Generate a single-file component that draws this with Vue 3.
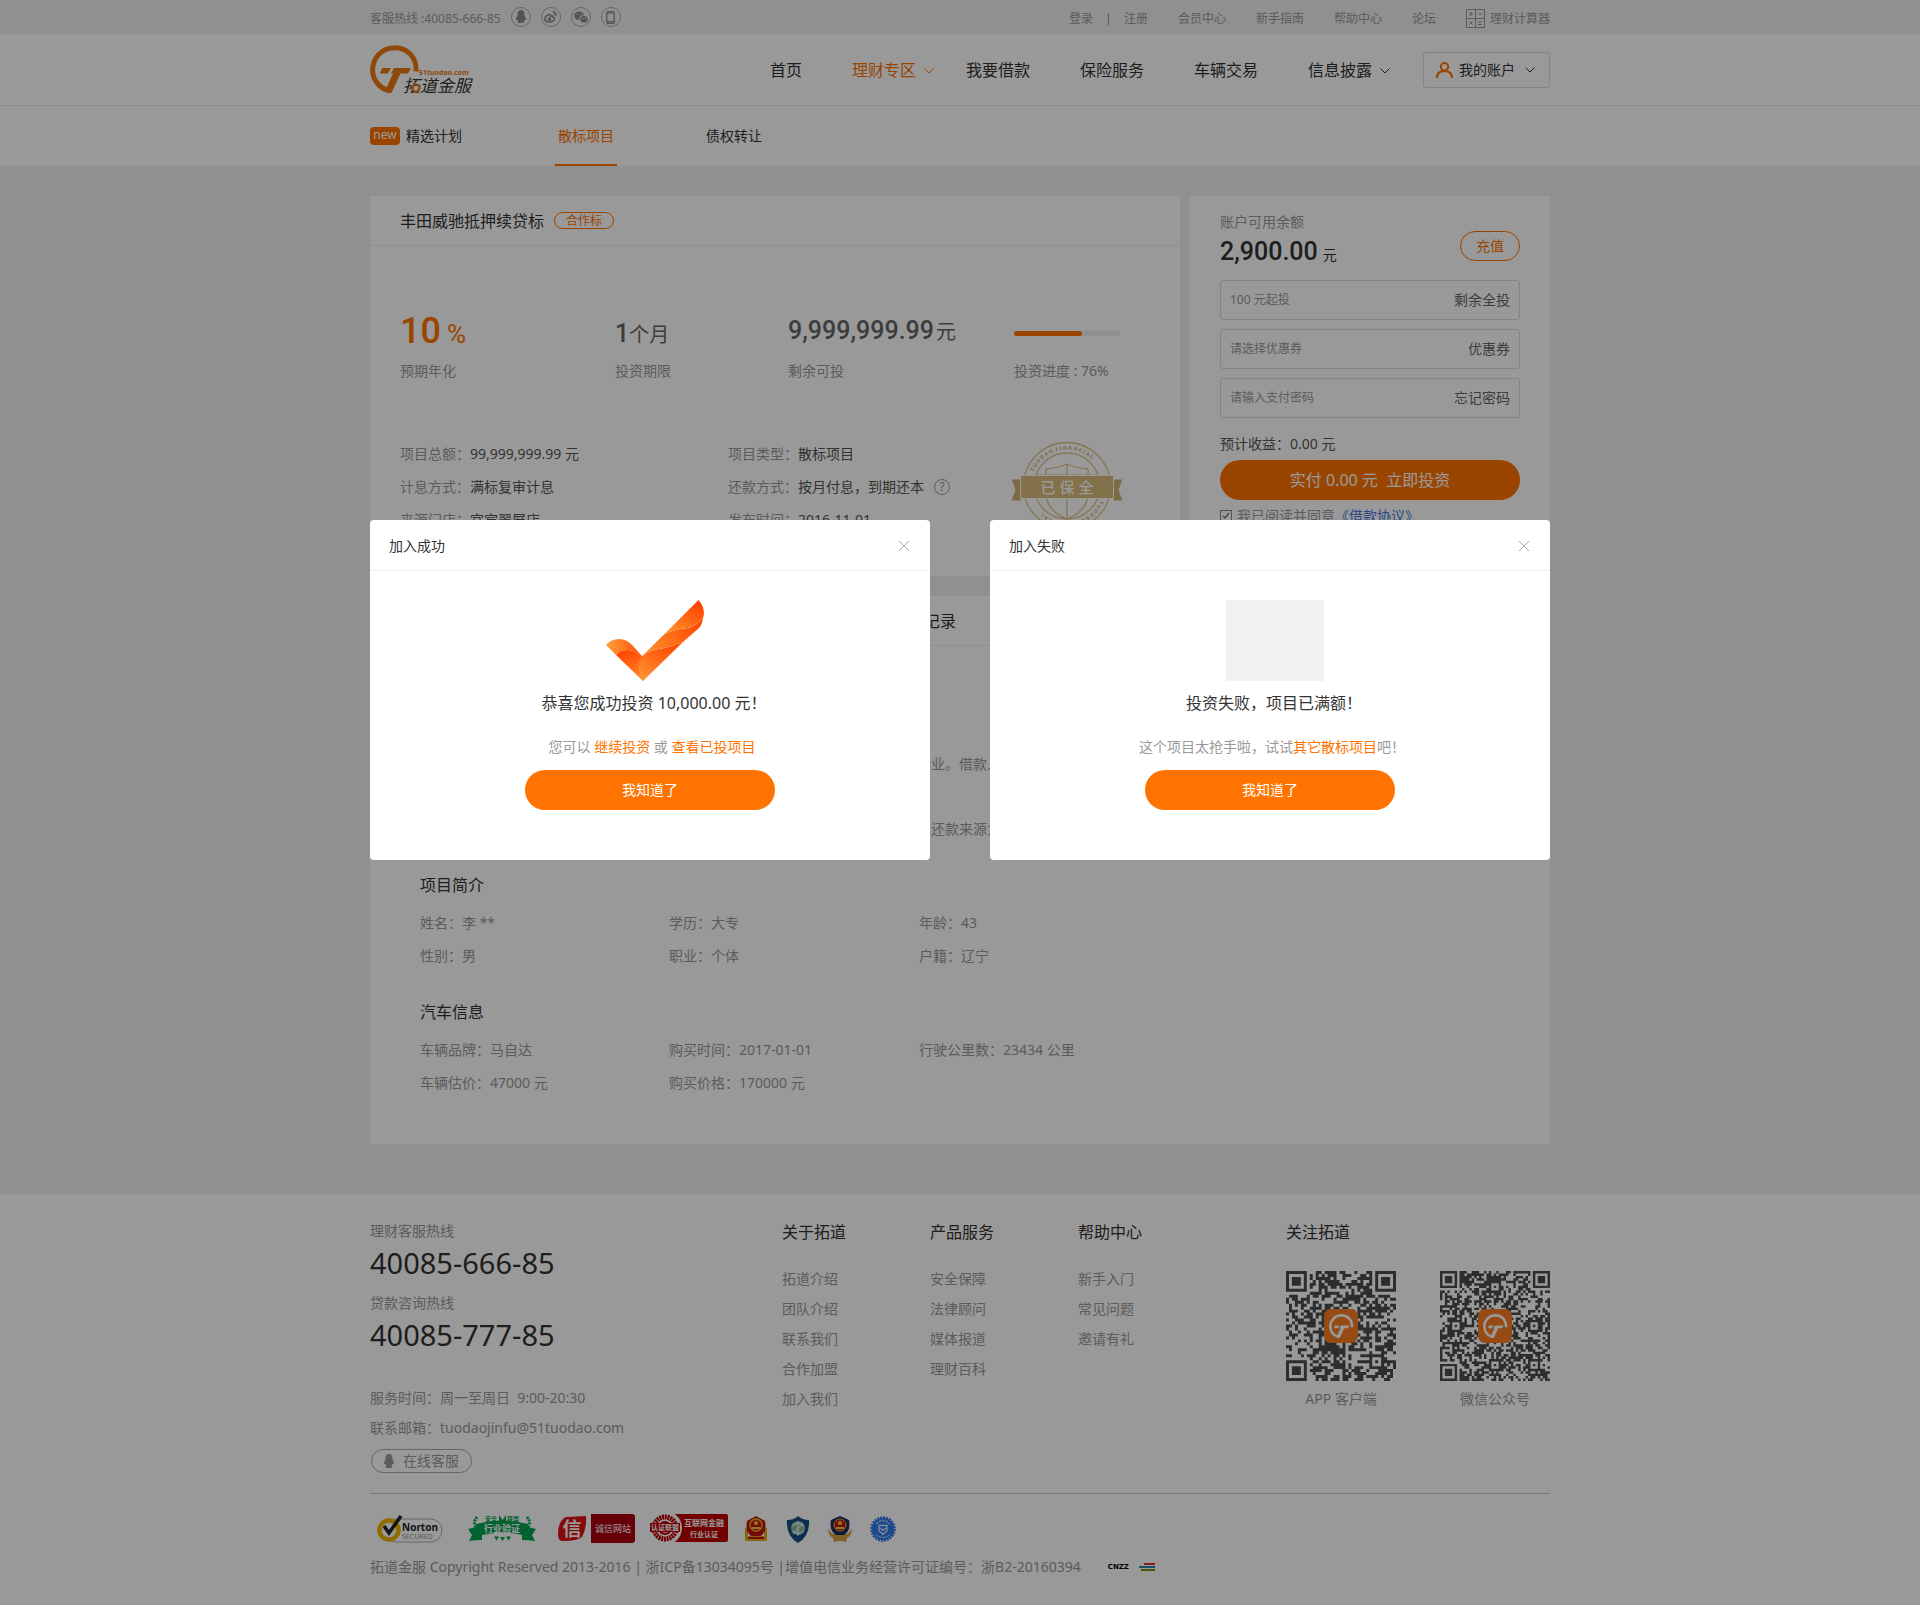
<script setup>
import { ref } from 'vue'

const topLinks = ['会员中心', '新手指南', '帮助中心', '论坛']
const navItems = [
  { text: '首页' },
  { text: '理财专区', active: true, arrow: true },
  { text: '我要借款' },
  { text: '保险服务' },
  { text: '车辆交易' },
  { text: '信息披露', arrow: true },
]
const details = [
  { label: '项目总额：', value: '99,999,999.99 元' },
  { label: '项目类型：', value: '散标项目' },
  { label: '计息方式：', value: '满标复审计息' },
  { label: '还款方式：', value: '按月付息，到期还本', help: true },
  { label: '来源门店：', value: '宜宾翠屏店' },
  { label: '发布时间：', value: '2016-11-01' },
]
const progress = 64
const groups = [
  { title: '项目简介', items: ['姓名：李 **', '学历：大专', '年龄：43', '性别：男', '职业：个体', '户籍：辽宁'] },
  {
    title: '汽车信息',
    items: ['车辆品牌：马自达', '购买时间：2017-01-01', '行驶公里数：23434 公里', '车辆估价：47000 元', '购买价格：170000 元'],
  },
]
const footCols = [
  { title: '关于拓道', links: ['拓道介绍', '团队介绍', '联系我们', '合作加盟', '加入我们'] },
  { title: '产品服务', links: ['安全保障', '法律顾问', '媒体报道', '理财百科'] },
  { title: '帮助中心', links: ['新手入门', '常见问题', '邀请有礼'] },
]

const agreed = ref(true)

// Builds the dark modules of a code: finders, alignment marks and data cells.
function codePath(n, marks, seed) {
  let s = seed
  const rand = () => {
    s = (s * 1103515245 + 12345) % 2147483648
    return s / 2147483648
  }
  const grid = Array.from({ length: n }, () => Array.from({ length: n }, () => rand() > 0.46))
  const stamp = (cx, cy, r, quiet) => {
    const reach = quiet ? r + 1 : r
    for (let y = cy - reach; y <= cy + reach; y++) {
      for (let x = cx - reach; x <= cx + reach; x++) {
        if (x < 0 || y < 0 || x >= n || y >= n) continue
        const d = Math.max(Math.abs(x - cx), Math.abs(y - cy))
        grid[y][x] = d === r || d <= r - 2
      }
    }
  }
  stamp(3, 3, 3, true)
  stamp(n - 4, 3, 3, true)
  stamp(3, n - 4, 3, true)
  marks.forEach(([x, y]) => stamp(x, y, 2, false))
  let d = ''
  grid.forEach((row, y) => row.forEach((on, x) => { if (on) d += `M${x} ${y}h1v1h-1z` }))
  return d
}
const codes = [
  { name: 'APP 客户端', n: 37, d: codePath(37, [[30, 30]], 71) },
  { name: '微信公众号', n: 45, d: codePath(45, [[22, 6], [6, 22], [38, 22], [22, 38], [38, 38]], 1234) },
]
</script>

<template>
  <div class="page">
    <div class="topbar">
      <div class="wrap topbar-in">
        <span>客服热线 :40085-666-85</span>
        <div class="socials">
          <a href="#" class="round" aria-label="QQ">
            <svg width="12" height="14" viewBox="0 0 12 14"><path fill="#8a8a8a" d="M6 0C3.700 0 2.500 1.700 2.500 4v1.500C1.500 7 .8 8.500 1 10c.2.600.9 0 1.200-.5.200.9.600 1.400 1.200 2-.9.400-.9 1.500.4 1.500.9 0 1.600-.2 2.200-.6.600.4 1.300.6 2.200.6 1.300 0 1.300-1.100.4-1.500.6-.6 1-1.100 1.200-2 .3.500 1 1.100 1.200.5.200-1.500-.5-3-1.500-4.500V4C9.500 1.700 8.300 0 6 0z" /></svg>
          </a>
          <a href="#" class="round" aria-label="微博">
            <svg width="14" height="12" viewBox="0 0 14 12" fill="none" stroke="#8a8a8a"><path d="M5.500 3.500C3 4 1 6 1 8c0 1.800 2 3 4.500 3S10.500 9.600 10.500 8c0-1-.8-1.500-1.500-1.700.3-1.300-.8-1.600-2.500-.9.200-1 .2-1.900-1-1.900z" stroke-width="1.600" /><circle cx="5.500" cy="8.200" r="1.300" fill="#8a8a8a" /><path d="M8.500.9c2.500-.3 4.500 1.800 4 4.300M9 3c1.100-.1 1.700.6 1.500 1.700" stroke-width="1.100" /></svg>
          </a>
          <a href="#" class="round" aria-label="微信">
            <svg width="14" height="13" viewBox="0 0 14 13"><path fill="#8a8a8a" d="M5.200.5C2.300.5.200 2.300.200 4.600c0 1.300.7 2.400 1.800 3.200L1.600 9.300l1.700-.9c.6.200 1.200.3 1.900.3C4.900 5.900 7 4.200 10 4.200 9.600 2 7.600.5 5.200.5z" /><path fill="#8a8a8a" d="M13.900 8.300c0-1.900-1.700-3.300-3.900-3.300S6 6.400 6 8.300s1.800 3.300 4 3.300c.5 0 1-.1 1.400-.2l1.400.8-.4-1.300c.9-.6 1.500-1.500 1.500-2.600z" /><path stroke="#eee" stroke-linecap="round" stroke-width="1.200" d="M3.500 3.400v.1M6.800 3.400v.1M8.700 7.400v.1M11.400 7.400v.1" /></svg>
          </a>
          <a href="#" class="round" aria-label="手机">
            <svg width="9" height="13" viewBox="0 0 9 13" fill="none" stroke="#8a8a8a"><rect x=".75" y=".75" width="7.500" height="11.500" rx="1.200" stroke-width="1.300" /><path d="M1 2h7M1 10.500h7" stroke-width=".9" /></svg>
          </a>
        </div>
        <nav class="toplinks">
          <a href="#">登录</a>
          <i class="bar"></i>
          <a href="#" class="reg">注册</a>
          <a v-for="t in topLinks" :key="t" href="#">{{ t }}</a>
          <a href="#" class="calc">
            <svg width="19" height="19" viewBox="0 0 19 19" fill="none" stroke="#999"><path d="M.5.5h18v18H.5zM9.500.5v18M.5 9.500h18M3 5h4M5 3v4M12 5h4M3.500 12.500l3 3M6.500 12.500l-3 3M12 13h4M12 15.500h4" /></svg>
            理财计算器
          </a>
        </nav>
      </div>
    </div>

    <header class="header">
      <div class="wrap header-in">
        <a href="#" class="logo" aria-label="拓道金服">
          <svg width="112" height="52" viewBox="0 0 112 52">
            <path fill="none" stroke="#ec7a12" stroke-width="5" d="M46 27.500C47 13 37 3.700 25 3.700 12 3.700 2.600 13.500 2.600 26c0 10 6.500 17.500 15.500 20.500L27 26.500" />
            <path fill="#ec7a12" d="M12 24h9l-3 5.500h-8zM24 24h17l-3 5.500h-7.500L21.500 49l-5-2.500L25 29.500h-4z" />
            <text x="49" y="31" font-size="7" font-weight="700" fill="#ec7a12">51tuodao.com</text>
            <text x="33" y="48" font-size="17" font-style="italic" fill="#333">拓道金服</text>
            <circle cx="46" cy="44" r="3.500" fill="none" stroke="#ec7a12" stroke-width="2" />
          </svg>
        </a>
        <nav class="nav">
          <a v-for="n in navItems" :key="n.text" href="#" :class="{ on: n.active }">
            {{ n.text }}
            <svg v-if="n.arrow" class="nav-arrow" width="10" height="6" viewBox="0 0 10 6" fill="none" stroke="currentColor"><path d="M.5.500 5 5 9.500.5" /></svg>
          </a>
        </nav>
        <button class="account">
          <svg width="17" height="16" viewBox="0 0 17 16" fill="none" stroke="#ff7300" stroke-width="2"><circle cx="8.500" cy="4.700" r="3.700" /><path d="M1 16c0-4.500 3-7 7.500-7s7.500 2.500 7.500 7" /></svg>
          <span>我的账户</span>
          <svg width="10" height="6" viewBox="0 0 10 6" fill="none" stroke="#333"><path d="M.5.500 5 5 9.500.5" /></svg>
        </button>
      </div>
    </header>

    <div class="subnav">
      <nav class="wrap subnav-in">
        <a href="#"><span class="new">new</span>精选计划</a>
        <a href="#" class="on">散标项目</a>
        <a href="#">债权转让</a>
      </nav>
    </div>

    <main class="wrap main">
      <div class="columns">
        <section class="card project">
          <div class="card-head">
            <h1>丰田威驰抵押续贷标</h1>
            <span class="tag">合作标</span>
          </div>
          <div class="stats">
            <div class="stat">
              <div class="figure rate"><b>10</b><span>%</span></div>
              <div class="cap">预期年化</div>
            </div>
            <div class="stat">
              <div class="figure term"><b>1</b>个月</div>
              <div class="cap">投资期限</div>
            </div>
            <div class="stat">
              <div class="figure left"><b>9,999,999.99</b>元</div>
              <div class="cap">剩余可投</div>
            </div>
            <div class="stat">
              <div class="figure gauge"><div class="track"><div class="fill" :style="{ width: progress + '%' }"></div></div></div>
              <div class="cap">投资进度 : 76%</div>
            </div>
          </div>
          <div class="details">
            <dl class="facts">
              <div v-for="d in details" :key="d.label">
                <dt>{{ d.label }}</dt>
                <dd>{{ d.value }}</dd>
                <span v-if="d.help" class="help">?</span>
              </div>
            </dl>
            <svg class="seal" width="112" height="90" viewBox="0 0 112 90">
              <defs>
                <path id="sealTop" d="M19.500 45a36.500 36.500 0 0 1 73 0" />
                <path id="sealBottom" d="M92.500 45a36.500 36.500 0 0 1-73 0" />
              </defs>
              <g fill="none" stroke="#e0c68c">
                <circle cx="56" cy="45" r="43.500" stroke-width="1.300" />
                <circle cx="56" cy="45" r="33" stroke-width="1.300" />
                <path stroke-width="1.300" d="M35 34V28q12-1 21-5 9 4 21 5v6M56 23v56M35 56q4 16 21 22 17-6 21-22" />
                <path d="M24 34h64M26 56h60" />
              </g>
              <g fill="#cbb277" font-size="5" font-weight="700">
                <text><textPath href="#sealTop" startOffset="15">T U O D A O&#160; F I N A N C I A L</textPath></text>
                <text><textPath href="#sealBottom" startOffset="15">T U O D A O&#160; F I N A N C I A L</textPath></text>
              </g>
              <path fill="#cdb170" stroke="#fff" d="M0 38h10v22H0l4-11zM112 38h-10v22h10l-4-11z" />
              <path fill="#d9bc7a" stroke="#fff" d="M9.500 34.500h93v23h-93z" />
              <text x="56" y="52" font-size="15" font-weight="500" fill="#fff" text-anchor="middle">已 保 全</text>
            </svg>
          </div>
        </section>

        <section class="card invest">
          <div class="balance">
            <div>
              <div class="bal-label">账户可用余额</div>
              <div class="bal"><b>2,900.00</b>元</div>
            </div>
            <button class="recharge">充值</button>
          </div>
          <div class="field"><input type="text" aria-label="投资金额" placeholder="100 元起投" /><button>剩余全投</button></div>
          <div class="field"><input type="text" aria-label="优惠券" placeholder="请选择优惠券" /><button>优惠券</button></div>
          <div class="field"><input type="password" aria-label="支付密码" placeholder="请输入支付密码" /><button>忘记密码</button></div>
          <div class="income">预计收益：0.00 元</div>
          <button class="pay">实付 0.00 元&#160; 立即投资</button>
          <label class="agree"><input v-model="agreed" type="checkbox" />我已阅读并同意<a href="#">《借款协议》</a></label>
        </section>
      </div>

      <section class="card info">
        <div class="card-head tabs">
          <a href="#">项目详情</a>
          <a href="#">投资记录</a>
        </div>
        <div class="intro">
          <p>借款人从事个体经营多年，收入稳定，信用记录良好，名下车辆一台，属于零售行业。借款人因店铺扩大经营，需要短期资金周转。</p>
          <p>借款人收入来源稳定，有较强的还款能力，抵押车辆已办理登记，风险整体可控，还款来源为店铺经营收入。</p>
        </div>
        <div v-for="g in groups" :key="g.title" class="group">
          <h2>{{ g.title }}</h2>
          <ul>
            <li v-for="i in g.items" :key="i">{{ i }}</li>
          </ul>
        </div>
      </section>
    </main>

    <footer class="footer">
      <div class="wrap">
        <div class="foot-top">
          <div class="contact">
            <div class="hot-label">理财客服热线</div>
            <div class="hot">40085-666-85</div>
            <div class="hot-label second">贷款咨询热线</div>
            <div class="hot">40085-777-85</div>
            <div class="service">服务时间：周一至周日&#160; 9:00-20:30</div>
            <div class="mail">联系邮箱：tuodaojinfu@51tuodao.com</div>
            <button class="online">
              <svg width="12" height="14" viewBox="0 0 12 14"><path fill="#999" d="M6 0C3.700 0 2.500 1.700 2.500 4v1.500C1.500 7 .8 8.500 1 10c.2.600.9 0 1.200-.5.200.9.600 1.400 1.200 2-.9.400-.9 2.500.4 2.500h4.400c1.300 0 1.300-2.100.4-2.500.6-.6 1-1.100 1.200-2 .3.500 1 1.100 1.200.5.200-1.500-.5-3-1.500-4.500V4C9.500 1.700 8.300 0 6 0z" /></svg>
              在线客服
            </button>
          </div>
          <div class="foot-cols">
            <div v-for="c in footCols" :key="c.title" class="foot-col">
              <h3>{{ c.title }}</h3>
              <a v-for="l in c.links" :key="l" href="#">{{ l }}</a>
            </div>
          </div>
          <div class="follow">
            <h3>关注拓道</h3>
            <div class="codes">
              <figure v-for="c in codes" :key="c.name">
                <svg width="110" height="110" :viewBox="`0 0 ${c.n} ${c.n}`">
                  <path :d="c.d" fill="#4c4c4c" />
                  <g :transform="`scale(${c.n / 110})`">
                    <rect x="38" y="38" width="34" height="34" rx="7" fill="#fa7d24" />
                    <g transform="translate(43 43) scale(.5)">
                      <path fill="none" stroke="#fff" stroke-width="5" d="M46 26.500C47 12 37 2.700 25 2.700 12 2.700 2.600 12.500 2.600 25c0 10 6.500 17.500 15.500 20.500L27 25.500" />
                      <path fill="#fff" d="M12 23h9l-3 5.500h-8zM24 23h17l-3 5.500h-7.500L21.500 48l-5-2.500L25 28.500h-4z" />
                    </g>
                  </g>
                </svg>
                <figcaption>{{ c.name }}</figcaption>
              </figure>
            </div>
          </div>
        </div>

        <div class="foot-bottom">
          <div class="badges">
            <svg class="b-norton" width="66" height="30" viewBox="0 0 66 30">
              <rect x="8" y="5" width="57" height="23" rx="11.500" fill="#fff" stroke="#aaa" />
              <circle cx="12" cy="16" r="9.500" fill="#fff" stroke="#f0b400" stroke-width="4.500" />
              <path d="M7 12l5 7L24 2" fill="none" stroke="#222" stroke-width="3.500" />
              <text x="25" y="17" font-size="10" font-weight="700" fill="#222">Norton</text>
              <text x="25" y="25" font-size="7" fill="#999">SECURED</text>
            </svg>
            <svg class="b-green" width="68" height="30" viewBox="0 0 68 30">
              <g fill="#04a650"><path d="M0 15l8-2v-3q26-7 52 0v3l8 2-4 6 3 6q-6-1-13-1v-5q-20-5-40 0v5q-7 0-13 1l3-6z" /><path d="M26 22.500h5l-2.500 4zM32 23h5l-2.500 4zM38 22.500h5l-2.500 4zM31 1l3.500 5L38 1v6h-7z" /></g>
              <path d="M9 3q-5 6 0 11M59 3q5 6 0 11" fill="none" stroke="#04a650" stroke-width="3" stroke-dasharray="2 1" />
              <text x="17" y="7" font-size="6" font-weight="700" fill="#04a650">安全</text>
              <text x="39" y="7" font-size="6" font-weight="700" fill="#04a650">联盟</text>
              <text x="34" y="18" font-size="9" font-weight="700" fill="#fff" text-anchor="middle">行业验证</text>
            </svg>
            <svg class="b-trust" width="78" height="30" viewBox="0 0 78 30">
              <path fill="#e01212" d="M9 3l20-1q1 12-4 21-4 4-20 4-4 0-4-7Q1 7 9 3z" />
              <text x="15" y="22" font-size="19" font-weight="700" fill="#fff" text-anchor="middle">信</text>
              <path fill="#ad0010" d="M34 0h41q3 0 3 3v23q0 3-3 3H34z" />
              <text x="56" y="18" font-size="9" fill="#fff" text-anchor="middle">诚信网站</text>
            </svg>
            <svg class="b-cert" width="78" height="30" viewBox="0 0 78 30">
              <rect x="22" y="0" width="56" height="28" rx="2" fill="#be0000" />
              <circle cx="15" cy="14" r="17" fill="#fff" />
              <circle cx="15" cy="14" r="11" fill="none" stroke="#be0000" stroke-width="5" stroke-dasharray="2 .7" />
              <circle cx="15" cy="14" r="6" fill="none" stroke="#be0000" stroke-width="2" />
              <path fill="#be0000" d="M0 9h30v9H0z" />
              <text x="15" y="16" font-size="7" font-weight="700" fill="#fff" text-anchor="middle">认证联盟</text>
              <text x="54" y="12" font-size="8" font-weight="700" fill="#fff" text-anchor="middle">互联网金融</text>
              <text x="54" y="23" font-size="7" font-weight="700" fill="#fff" text-anchor="middle">行业认证</text>
            </svg>
            <svg class="b-police" width="24" height="27" viewBox="0 0 24 27">
              <path fill="#e3a818" d="M1 12q3-1 3 2v6h16v-6q0-3 3-2v13H1z" />
              <path fill="#c1130c" d="M12 0l9 5q2 10-4 15H7Q1 15 3 5zM4 21h16v2H4z" />
              <circle cx="12" cy="9" r="6" fill="#c1130c" stroke="#efb820" stroke-width="1.500" />
              <path fill="#f7cb35" d="M12 4l1 2h2l-1.500 1.500.5 2-2-1-2 1 .5-2L9 6h2zM8 11h8v2H8z" />
            </svg>
            <svg class="b-shield" width="24" height="27" viewBox="0 0 24 27">
              <path fill="#154f86" d="M1 4q7 0 11-4 4 4 11 4 1 16-11 23Q0 20 1 4z" />
              <circle cx="12" cy="12" r="7" fill="#8fb9a4" /><path fill="none" stroke="#fff" d="M6 10q6-6 12 0M6 15q6 5 12 0M12 5v15M7 18l10-11" />
            </svg>
            <svg class="b-police" width="24" height="27" viewBox="0 0 24 27">
              <path fill="#d9a04a" d="M1 11q0 5 4 7h14q4-2 4-7 2 8-4 11l-1 4q-6-2-12 0l-1-4Q-1 19 1 11z" />
              <path fill="#1c2e62" d="M12 0l9 4q2 11-5 15H8Q1 15 3 4z" />
              <circle cx="12" cy="9" r="6" fill="#c1130c" stroke="#efb820" />
              <path fill="#f7cb35" d="M12 4l1 2h2l-1.500 1.500.5 2-2-1-2 1 .5-2L9 6h2zM8 11h8v2H8z" />
            </svg>
            <svg class="b-blue" width="26" height="27" viewBox="0 0 26 27">
              <circle cx="13" cy="13" r="11" fill="#2f78ea" /><circle cx="13" cy="13" r="11.500" fill="none" stroke="#2f78ea" stroke-width="2.500" stroke-dasharray="2 1" />
              <path fill="none" stroke="#dbe8ff" stroke-dasharray="2 1.500" stroke-width="1.500" d="M6.500 8q6.500-7 13 0" />
              <path fill="none" stroke="#dbe8ff" stroke-width=".8" d="M6 19q7 5 14 0" />
              <path fill="none" stroke="#dbe8ff" stroke-width="1.300" d="M9 9.500h8v5.500l-4 3.500-4-3.500zM10.500 12l2.500 2.500 3-2.500" />
            </svg>
          </div>
          <div class="copy">
            <span>拓道金服 Copyright Reserved 2013-2016 | 浙ICP备13034095号 |增值电信业务经营许可证编号：浙B2-20160394</span>
            <b class="cnzz">CNZZ</b>
            <svg width="16" height="8" viewBox="0 0 16 8"><path fill="#e02d2d" d="M5 0h11v2H5z" /><path fill="#3183b5" d="M0 3h16v2H0z" /><path fill="#6f9a12" d="M2 6h14v2H2z" /></svg>
          </div>
        </div>
      </div>
    </footer>

    <div class="mask">
      <div class="wrap dialogs">
        <section class="dialog" role="dialog" aria-labelledby="okTitle">
          <div class="dialog-head">
            <h2 id="okTitle">加入成功</h2>
            <button class="close" aria-label="关闭"><svg width="10" height="10" viewBox="0 0 10 10" stroke="#aaa"><path d="M0 0l10 10M10 0 0 10" /></svg></button>
          </div>
          <div class="dialog-body">
            <svg class="pic" width="98" height="81" viewBox="0 0 98 81">
              <defs>
                <linearGradient id="up" x1="0" y1="1" x2=".7" y2="0"><stop offset="0" stop-color="#ff9a35" /><stop offset="1" stop-color="#ff4500" /></linearGradient>
                <linearGradient id="mid" x1="0" y1=".8" x2="1" y2=".3"><stop offset="0" stop-color="#ff8f2c" /><stop offset="1" stop-color="#ff4a04" /></linearGradient>
                <linearGradient id="low" x1="0" y1="1" x2=".6" y2="0"><stop offset="0" stop-color="#ff9a35" /><stop offset="1" stop-color="#ff4a04" /></linearGradient>
                <linearGradient id="tip" x1="0" y1="0" x2="1" y2="0"><stop offset="0" stop-color="#ff9f38" /><stop offset="1" stop-color="#ff4f08" /></linearGradient>
                <linearGradient id="fold" x1=".3" y1="0" x2=".7" y2="1"><stop offset="0" stop-color="#ff4500" /><stop offset="1" stop-color="#ff8a2a" /></linearGradient>
              </defs>
              <path fill="url(#fold)" d="M10 55Q14 50 22 50 30 50 36 56L42 70 37 81z" />
              <path fill="url(#tip)" d="M0 45Q5 39 13 39 21 39 27 46L36 56Q30 50 22 50 14 50 10 55z" />
              <path fill="url(#low)" d="M77 42L37 81Q28 66 36 56 44 50 58 48 68 46 77 42z" />
              <path fill="url(#mid)" d="M97 18Q96 25 93 28L77 42Q68 46 58 48 44 50 36 56L58 34.500Q68 29 82 28 90 26 97 18z" />
              <path fill="url(#up)" d="M92.500 0Q98 6 98 14L97 18Q90 26 82 28 68 29 58 34.500z" />
            </svg>
            <h3>恭喜您成功投资 10,000.00 元！</h3>
            <p>您可以 <a href="#">继续投资</a> 或 <a href="#">查看已投项目</a></p>
            <button class="ok">我知道了</button>
          </div>
        </section>
        <section class="dialog" role="dialog" aria-labelledby="failTitle">
          <div class="dialog-head">
            <h2 id="failTitle">加入失败</h2>
            <button class="close" aria-label="关闭"><svg width="10" height="10" viewBox="0 0 10 10" stroke="#aaa"><path d="M0 0l10 10M10 0 0 10" /></svg></button>
          </div>
          <div class="dialog-body">
            <div class="pic blank"></div>
            <h3>投资失败，项目已满额！</h3>
            <p>这个项目太抢手啦，试试<a href="#">其它散标项目</a>吧！</p>
            <button class="ok">我知道了</button>
          </div>
        </section>
      </div>
    </div>
  </div>
</template>

<style>
body { margin: 0; background: #f0f0f0; }
</style>

<style scoped>
.page { position: relative; font-family: "Noto Sans", "Noto Sans CJK SC", sans-serif; font-size: 14px; line-height: 24px; color: #333; background: #f0f0f0; }
.page * { box-sizing: border-box; }
a { color: inherit; text-decoration: none; }
button { font: inherit; color: inherit; background: none; border: 0; padding: 0; cursor: pointer; }
h1, h2, h3, p, ul, dl, dd, figure { margin: 0; padding: 0; font-weight: inherit; }
svg { display: block; flex: none; }
b { font-weight: 500; }
.wrap { max-width: 1180px; margin: 0 auto; }

.topbar { font-size: 12px; color: #999; }
.topbar-in { display: flex; align-items: center; height: 34px; }
.topbar-in > span { padding-top: 3px; }
.socials { display: flex; gap: 10px; margin-left: 10px; }
.round { display: flex; align-items: center; justify-content: center; width: 20px; height: 20px; border: 1px solid #aaa; border-radius: 50%; }
.toplinks { display: flex; align-items: center; gap: 30px; margin-left: auto; padding-top: 3px; }
.bar { width: 1px; height: 12px; margin: 0 -15px; background: #999; }
.calc { display: flex; align-items: center; gap: 5px; }

.header { background: #fff; border-bottom: 1px solid #e8e8e8; }
.header-in { display: flex; align-items: center; height: 71px; }
.nav { display: flex; gap: 50px; margin-left: auto; font-size: 16px; }
.nav a { position: relative; }
.nav .on, .subnav .on { color: #ff7300; }
.nav-arrow { position: absolute; left: calc(100% + 8px); top: 10px; }
.account { display: flex; align-items: center; gap: 6px; width: 127px; height: 36px; margin-left: 51px; padding: 0 14px 0 12px; border: 1px solid #ddd; border-radius: 3px; }
.account span { flex: 1; text-align: left; }

.subnav { background: #fff; }
.subnav-in { display: flex; gap: 86px; line-height: 60px; }
.subnav-in a { display: flex; align-items: center; height: 60px; padding: 0 3px; }
.subnav-in a:first-child { padding: 0 7px 0 0; }
.subnav .on { border-bottom: 2px solid #ff7300; padding-top: 2px; }
.new { width: 30px; height: 18px; margin-right: 6px; border-radius: 4px; background: #ff7300; color: #fff; font-size: 12px; line-height: 16px; text-align: center; }

.main { padding: 30px 0 50px; }
.card { background: #fff; }
.columns { display: flex; gap: 10px; margin-bottom: 20px; }
.project { flex: 1; height: 380px; }
.card-head { display: flex; align-items: center; gap: 10px; height: 50px; padding: 0 30px; border-bottom: 1px solid #eee; }
.card-head h1 { font-size: 16px; }
.tag { padding: 0 11px; border: 1px solid #ff7300; border-radius: 9px; color: #ff7300; font-size: 12px; line-height: 15px; }

.stats { display: grid; grid-template-columns: 215px 173px 226px 1fr; padding: 61px 30px 0; }
.figure { height: 52px; display: flex; align-items: baseline; font-size: 20px; line-height: 52px; color: #666; }
.figure b { font-family: Roboto, sans-serif; font-size: 25px; }
.rate { color: #ff7300; font-family: Roboto, sans-serif; font-size: 26px; line-height: 48px; gap: 6px; }
.rate b { font-size: 36px; }
.term { line-height: 54px; }
.left { gap: 2px; line-height: 48px; }
.gauge { align-items: center; }
.track { width: 106px; height: 5px; border-radius: 3px; background: #eee; }
.fill { height: 5px; border-radius: 3px; background: #ff7300; }
.cap { color: #999; }
.details { display: flex; justify-content: space-between; padding: 54px 57px 0 30px; }
.facts { display: grid; grid-template-columns: 328px 240px; line-height: 33px; align-content: start; }
.facts > div { display: flex; align-items: center; }
.facts dt { color: #999; }
.facts dd { color: #555; }
.help { width: 16px; height: 16px; margin-left: 10px; border: 1px solid #999; border-radius: 50%; color: #999; font-size: 12px; line-height: 14px; text-align: center; }
.seal { margin-top: 4px; }

.invest { width: 360px; height: 380px; padding: 14px 30px 0; overflow: hidden; }
.balance { display: flex; align-items: flex-start; justify-content: space-between; height: 70px; }
.bal-label { color: #999; }
.bal { display: flex; align-items: baseline; gap: 5px; line-height: 36px; }
.bal b { font-family: Roboto, sans-serif; font-size: 25px; }
.recharge { width: 60px; height: 30px; margin-top: 21px; border: 1px solid #ff7300; border-radius: 15px; color: #ff7300; }
.field { display: flex; align-items: center; height: 40px; margin-bottom: 9px; padding: 0 9px; border: 1px solid #ddd; border-radius: 3px; }
.field input { flex: 1; min-width: 0; padding: 0; border: 0; outline: 0; background: none; font: inherit; font-size: 12px; }
.field input::placeholder { color: #999; opacity: 1; }
.field button { color: #666; }
.income { margin-top: 12px; height: 28px; line-height: 28px; color: #555; }
.pay { display: block; width: 100%; height: 40px; margin-top: 2px; border-radius: 20px; background: #ff7300; color: #fff; font-size: 16px; }
.agree { display: flex; align-items: center; margin-top: 4px; color: #999; }
.agree input { appearance: none; width: 12px; height: 12px; margin: 0 5px 0 0; border: 1px solid #888; }
.agree input:checked { background: url("data:image/svg+xml,%3Csvg xmlns='http://www.w3.org/2000/svg' viewBox='0 0 10 10'%3E%3Cpath d='M2 5l2 2 4-5' fill='none' stroke='%23777' stroke-width='1.500'/%3E%3C/svg%3E") center / 10px 10px no-repeat; }
.agree a { color: #4a78dc; }

.info { height: 548px; }
.tabs { gap: 60px; padding: 0 50px; font-size: 16px; }
.tabs a { width: 412px; }
.tabs a + a { width: auto; }
.intro { display: flex; flex-direction: column; gap: 41px; margin-bottom: 4px; padding: 106px 57px 0; color: #999; white-space: nowrap; overflow: hidden; }
.group { padding: 28px 50px 0; }
.group h2 { font-size: 16px; }
.group ul { display: grid; grid-template-columns: 249px 250px 1fr; margin-top: 9px; line-height: 33px; list-style: none; color: #999; }

.footer { background: #fff; color: #999; }
.foot-top { display: flex; padding: 25px 0 20px; border-bottom: 1px solid #ccc; }
.contact { width: 412px; }
.hot { font-size: 29px; line-height: 40px; color: #333; }
.second { margin-top: 8px; }
.service { margin-top: 28px; line-height: 30px; }
.mail { line-height: 30px; }
.online { display: flex; align-items: center; gap: 8px; width: 101px; height: 24px; margin: 6px 0 0 1px; padding: 0 0 0 11px; border: 1px solid #aaa; border-radius: 12px; }
.footer h3 { font-size: 16px; line-height: 26px; color: #333; }
.foot-cols { display: flex; gap: 84px; }
.foot-col { display: flex; flex-direction: column; line-height: 30px; }
.foot-col h3 { margin-bottom: 19px; }
.follow { margin-left: auto; }
.codes { display: flex; gap: 44px; margin-top: 26px; }
.codes figcaption { margin-top: 3px; line-height: 30px; text-align: center; }
.foot-bottom { padding: 20px 0 26px; }
.badges { display: flex; align-items: center; height: 30px; padding-left: 7px; }
.b-green { margin-left: 25px; }
.b-trust { margin-left: 21px; }
.b-cert { margin-left: 15px; margin-right: 16px; }
.b-shield { margin: 0 18px; }
.b-blue { margin-left: 18px; }
.copy { display: flex; align-items: center; margin-top: 11px; }
.cnzz { margin: 0 10px 0 27px; color: #000; font: 700 7px/8px "DejaVu Sans", sans-serif; }

.mask { position: absolute; inset: 0; padding-top: 520px; background: rgba(0, 0, 0, 0.4); }
.dialogs { display: flex; gap: 60px; }
.dialog { flex: 1; height: 340px; border-radius: 4px; background: #fff; }
.dialog-head { display: flex; align-items: center; justify-content: space-between; height: 51px; padding: 2px 21px 0 19px; border-bottom: 1px solid #eee; }
.dialog-head h2 { font-size: 14px; }
.dialog-body { display: flex; flex-direction: column; align-items: center; padding-top: 29px; text-align: center; }
.pic { width: 98px; height: 81px; margin-left: 10px; }
.blank { background: #f2f2f2; }
.dialog h3 { margin-top: 10px; padding-left: 8px; font-size: 16px; }
.dialog p { margin: 20px 0 11px; padding-left: 4px; color: #999; }
.dialog p a { color: #ff7300; }
.ok { width: 250px; height: 40px; border-radius: 20px; background: #ff7300; color: #fff; }
</style>
